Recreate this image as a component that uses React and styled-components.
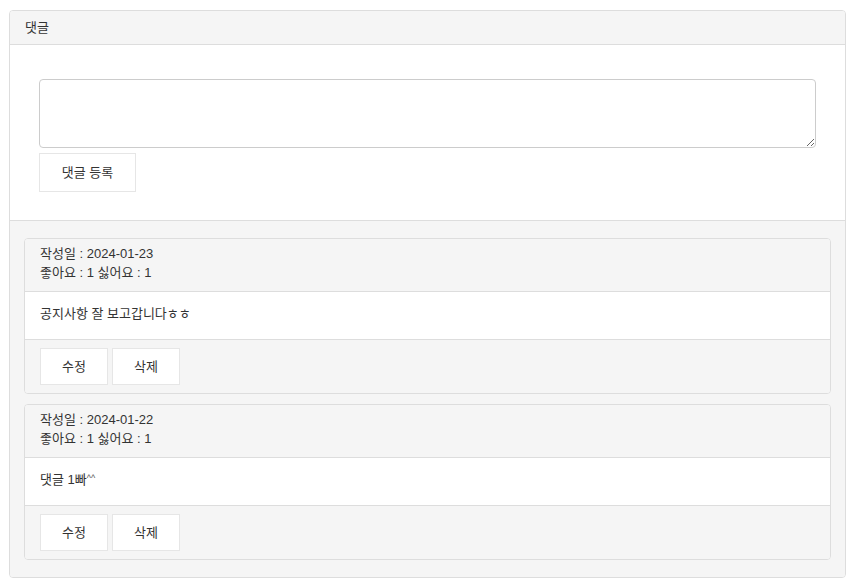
import React from "react"
import styled, { createGlobalStyle } from "styled-components"

const GlobalStyle = createGlobalStyle`
  html, body {
    margin: 0;
    padding: 0;
    background: #fff;
  }
  body {
    font-family: "Liberation Sans", "Noto Sans CJK KR", sans-serif;
    font-size: 13px;
    color: #333;
  }
`

const Page = styled.div`
  padding: 10px 10px 8px 9px;
`

const Panel = styled.div`
  border: 1px solid #ddd;
  border-radius: 4px;
  background: #fff;
  overflow: hidden;
`

const PanelHeading = styled.div`
  background: #f5f5f5;
  border-bottom: 1px solid #ddd;
  padding: 0 15px 3px;
  height: 30px;
  display: flex;
  align-items: center;
`

const FormBody = styled.div`
  padding: 34px 29px 28px;
  display: flex;
  flex-direction: column;
  gap: 5px;
  border-bottom: 1px solid #ddd;
`

const TextArea = styled.textarea`
  display: block;
  box-sizing: border-box;
  width: 100%;
  height: 69px;
  border: 1px solid #ccc;
  border-radius: 4px;
  margin: 0;
  font: inherit;
  resize: vertical;
`

const Button = styled.button`
  box-sizing: border-box;
  width: ${({ $w }) => $w || 68}px;
  height: ${({ $h }) => $h || 37}px;
  background: #fff;
  border: 1px solid #e6e6e6;
  border-radius: 0;
  font: inherit;
  color: #333;
  padding: 0 0 2px;
  cursor: pointer;
`

const CommentList = styled.div`
  background: #f5f5f5;
  padding: 17px 14px 17px;
  display: flex;
  flex-direction: column;
  gap: 10px;
`

const Comment = styled.div`
  border: 1px solid #ddd;
  border-radius: 4px;
  background: #fff;
  overflow: hidden;
`

const CommentHead = styled.div`
  background: #f5f5f5;
  border-bottom: 1px solid #ddd;
  padding: 5px 15px 9px;
  line-height: 19px;
`

const CommentBody = styled.div`
  padding: 13px 15px 17px;
  height: 17px;
  line-height: 17px;
  border-bottom: 1px solid #ddd;
`

const CommentFoot = styled.div`
  background: #f5f5f5;
  padding: 8px 15px 8px;
  display: flex;
  gap: 4px;
`

const Caret = styled.span`
  font-size: 9px;
  line-height: 0;
  vertical-align: 3px;
  color: #555;
`

const comments = [
  { date: "2024-01-23", like: 1, hate: 1, text: "공지사항 잘 보고갑니다ㅎㅎ" },
  { date: "2024-01-22", like: 1, hate: 1, text: "댓글 1빠", tail: "^^" },
]

export default function App() {
  return (
    <>
      <GlobalStyle />
      <Page>
        <Panel>
          <PanelHeading>댓글</PanelHeading>
          <FormBody>
            <TextArea />
            <div>
              <Button $w={97} $h={39}>댓글 등록</Button>
            </div>
          </FormBody>
          <CommentList>
            {comments.map((c) => (
              <Comment key={c.date}>
                <CommentHead>
                  <div>작성일 : {c.date}</div>
                  <div>좋아요 : {c.like} 싫어요 : {c.hate}</div>
                </CommentHead>
                <CommentBody>
                  {c.text}
                  {c.tail && <Caret>{c.tail}</Caret>}
                </CommentBody>
                <CommentFoot>
                  <Button>수정</Button>
                  <Button>삭제</Button>
                </CommentFoot>
              </Comment>
            ))}
          </CommentList>
        </Panel>
      </Page>
    </>
  )
}
